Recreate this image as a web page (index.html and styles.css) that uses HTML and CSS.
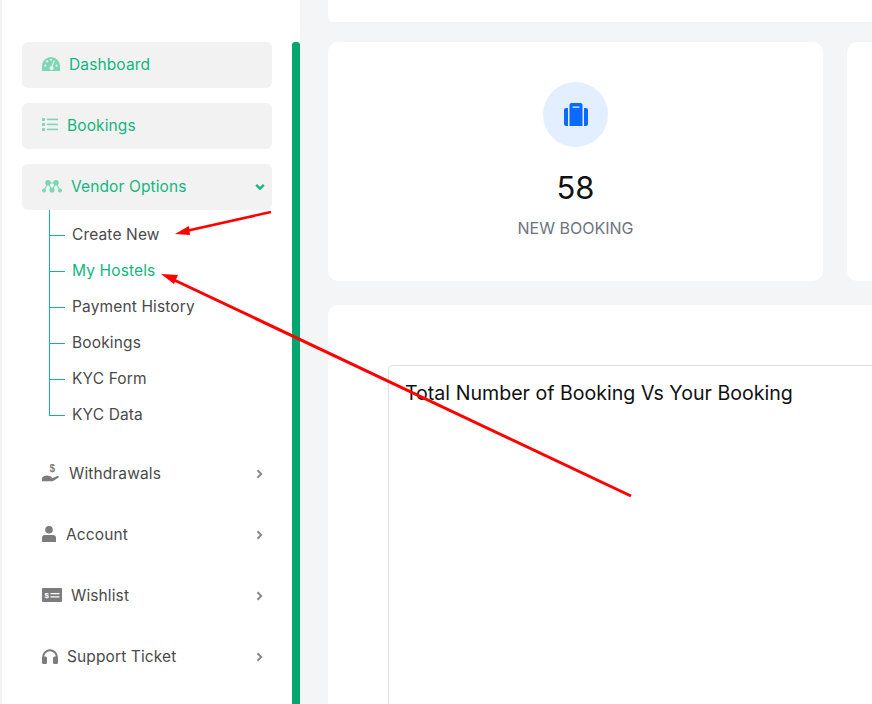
FILE: index.html
```html
<!DOCTYPE html>
<html lang="en">
<head>
  <meta charset="UTF-8">
  <title>Vendor Dashboard</title>
  <link rel="stylesheet" href="styles.css">
</head>
<body>
  <div class="page">
    <aside class="sidebar">
      <nav class="menu">
        <a class="item active">
          <svg class="ico" width="18" height="14" viewBox="0 0 18 14"><path fill="#7dd6b4" d="M9 0a9 9 0 0 1 9 9v5H0V9a9 9 0 0 1 9-9z"/><g fill="#f2f2f2"><circle cx="3.400" cy="8.600" r="1.100"/><circle cx="5.200" cy="4.400" r="1.100"/><circle cx="9" cy="2.800" r="1.100"/><circle cx="14.600" cy="8.600" r="1.100"/><path d="M11.600 3.400l1.200.5-2.200 5.600a2 2 0 1 1-1.300-.3z"/></g></svg>
          <span class="label l-dash">Dashboard</span>
        </a>
        <a class="item active">
          <svg class="ico" width="16" height="14" viewBox="0 0 16 14"><g fill="#7dd6b4"><rect y="0" width="3" height="3" rx="1"/><rect y="5" width="3" height="3" rx="1"/><rect y="10" width="3" height="3" rx="1"/><rect x="5" y=".6" width="11" height="1.600"/><rect x="5" y="5.600" width="11" height="1.600"/><rect x="5" y="10.600" width="11" height="1.600"/></g></svg>
          <span class="label l-book">Bookings</span>
        </a>
        <a class="item active">
          <svg class="ico" width="20" height="13" viewBox="0 0 20 13"><path d="M2 10.500L6 3l4 7 4-7 4 7.500M6 3h8" fill="none" stroke="#7dd6b4" stroke-width="1.100"/><g fill="#7dd6b4"><circle cx="6" cy="2.800" r="2.800"/><circle cx="14" cy="2.800" r="2.800"/><circle cx="10" cy="10" r="2.600"/><circle cx="2" cy="10.600" r="2"/><circle cx="18" cy="10.600" r="2"/></g></svg>
          <span class="label l-vend">Vendor Options</span>
          <svg class="chev" width="10" height="8" viewBox="0 0 10 8"><path d="M1.200 1.800L5 5.600l3.800-3.800" fill="none" stroke="#13b981" stroke-width="2.400"/></svg>
        </a>
        <ul class="sub">
          <li>Create New</li>
          <li class="on">My Hostels</li>
          <li>Payment History</li>
          <li>Bookings</li>
          <li>KYC Form</li>
          <li>KYC Data</li>
        </ul>
        <a class="item">
          <svg class="ico" width="19" height="18" viewBox="0 0 19 18"><text class="dollar" x="7.500" y="8">$</text><path fill="#7c7c7c" d="M0 13.800c2-2 4-2.500 6-2l3 .7c1.200.3 1.200 1.600 0 1.700H6.500h3.500l5-2c1.600-.6 2.600.7 1.300 1.500l-4.800 3c-.6.400-1.200.5-2 .5H0z"/></svg>
          <span class="label l-with">Withdrawals</span>
          <svg class="chev" width="7" height="10" viewBox="0 0 7 10"><path d="M1.500 1.200L5.200 5 1.500 8.800" fill="none" stroke="#8a8a8a" stroke-width="2"/></svg>
        </a>
        <a class="item">
          <svg class="ico" width="14" height="16" viewBox="0 0 14 16"><circle cx="7" cy="3.800" r="3.800" fill="#7c7c7c"/><path fill="#7c7c7c" d="M3 9h8a3 3 0 0 1 3 3v4H0v-4a3 3 0 0 1 3-3z"/></svg>
          <span class="label l-acct">Account</span>
          <svg class="chev" width="7" height="10" viewBox="0 0 7 10"><path d="M1.500 1.200L5.200 5 1.500 8.800" fill="none" stroke="#8a8a8a" stroke-width="2"/></svg>
        </a>
        <a class="item">
          <svg class="ico" width="20" height="14" viewBox="0 0 20 14"><rect width="20" height="14" rx="1" fill="#7c7c7c"/><text class="dollar-w" x="2.500" y="10.300">$</text><path d="M8.500 5.600h9M8.500 8.800h9" stroke="#fff" stroke-width="1.300"/></svg>
          <span class="label l-wish">Wishlist</span>
          <svg class="chev" width="7" height="10" viewBox="0 0 7 10"><path d="M1.500 1.200L5.200 5 1.500 8.800" fill="none" stroke="#8a8a8a" stroke-width="2"/></svg>
        </a>
        <a class="item">
          <svg class="ico" width="16" height="15" viewBox="0 0 16 15"><path d="M1.200 10V8a6.800 6.800 0 0 1 13.600 0v2" fill="none" stroke="#7c7c7c" stroke-width="2"/><rect x="0" y="7.500" width="5" height="7.500" rx="1.500" fill="#7c7c7c"/><rect x="11" y="7.500" width="5" height="7.500" rx="1.500" fill="#7c7c7c"/></svg>
          <span class="label l-supp">Support Ticket</span>
          <svg class="chev" width="7" height="10" viewBox="0 0 7 10"><path d="M1.500 1.200L5.200 5 1.500 8.800" fill="none" stroke="#8a8a8a" stroke-width="2"/></svg>
        </a>
      </nav>
      <div class="scrollbar"></div>
    </aside>

    <main class="content">
      <div class="card top-card"></div>
      <div class="stats">
        <div class="card stat">
          <div class="stat-icon">
            <svg width="24" height="23" viewBox="0 0 24 23"><g fill="#0b6bff"><path d="M5.500 2a2 2 0 0 1 2-2h9a2 2 0 0 1 2 2v21h-13z"/><path d="M4 5v18H2a2 2 0 0 1-2-2V7a2 2 0 0 1 2-2z"/><path d="M20 5v18h2a2 2 0 0 0 2-2V7a2 2 0 0 0-2-2z"/></g><rect x="8.500" y="3.500" width="7" height="1.300" fill="#dce9ff"/></svg>
          </div>
          <div class="stat-num">58</div>
          <div class="stat-name">NEW BOOKING</div>
        </div>
        <div class="card stat"></div>
      </div>
      <div class="card chart-card">
        <div class="chart-box">
          <h4>Total Number of Booking Vs Your Booking</h4>
        </div>
      </div>
    </main>

    <svg class="arrows" width="872" height="704" viewBox="0 0 872 704">
      <g fill="none" stroke="#f00">
        <path stroke-width="2.500" d="M271 212L186 231"/>
        <path stroke-width="3" d="M631 496L172 279"/>
      </g>
      <g fill="#f00">
        <path d="M175 234l14-8 1 9z"/>
        <path d="M161 274l17 1-4 9z"/>
      </g>
    </svg>
  </div>
</body>
</html>
```

FILE: styles.css
```css
* {
  box-sizing: border-box;
}
body {
  margin: 0;
  background: #f4f5f7;
  font-family: Inter, "Noto Sans", sans-serif;
  color: #111;
}
.page {
  position: relative;
  display: flex;
  width: 872px;
  height: 704px;
  overflow: hidden;
}
.sidebar {
  display: flex;
  flex: none;
  width: 298px;
  margin-left: 2px;
  padding: 42px 0 0 20px;
  background: #fff;
}
.menu {
  display: flex;
  flex-direction: column;
  width: 250px;
}
.item {
  display: flex;
  align-items: center;
  flex: none;
  height: 46px;
  margin-bottom: 15px;
  padding: 0 6px 2px 20px;
  border-radius: 6px;
  font-size: 15.5px;
  letter-spacing: .12px;
  color: #4a4a4a;
}
.item.active {
  background: #f2f2f2;
  color: #10b77f;
  padding-right: 7px;
}
.ico {
  flex: none;
}
.label {
  flex: 1;
}
.l-dash { margin-left: 9px; }
.l-book { margin-left: 9px; }
.l-vend { margin-left: 9px; }
.l-with { margin-left: 8px; }
.l-acct { margin-left: 10px; }
.l-wish { margin-left: 9px; }
.l-supp { margin-left: 9px; }
.chev {
  flex: none;
  margin: 2px 3px 0 0;
}
.item.active .chev {
  margin: 1px 0 0 0;
}
.dollar {
  font: bold 10px "Liberation Sans", sans-serif;
  fill: #7c7c7c;
}
.dollar-w {
  font: bold 8px "Liberation Sans", sans-serif;
  fill: #fff;
}
.sub {
  list-style: none;
  flex: none;
  margin: -15px 0 1px 27px;
  padding: 7px 0 17px 0;
  position: relative;
  font-size: 15.5px;
  letter-spacing: .14px;
  color: #4a4a4a;
}
.sub::before {
  content: "";
  position: absolute;
  left: 0;
  top: 0;
  height: 206px;
  width: 1px;
  background: #13b981;
}
.sub li {
  position: relative;
  height: 36px;
  line-height: 36px;
  padding-left: 23px;
}
.sub li::before {
  content: "";
  position: absolute;
  left: 0;
  top: 18px;
  width: 16px;
  height: 1px;
  background: #13b981;
}
.sub li.on {
  color: #10b77f;
}
.scrollbar {
  flex: none;
  width: 8px;
  margin-left: 20px;
  background: #04a56f;
  border-radius: 3px 3px 0 0;
}
.content {
  flex: none;
  width: 572px;
  padding-left: 28px;
}
.card {
  background: #fff;
  border-radius: 10px;
}
.top-card {
  height: 22px;
  width: 800px;
  border-radius: 0 0 6px 6px;
  margin-bottom: 20px;
}
.stats {
  display: grid;
  grid-template-columns: 495px 495px;
  gap: 24px;
  margin-bottom: 24px;
}
.stat {
  display: flex;
  flex-direction: column;
  align-items: center;
  height: 239px;
  padding-top: 40px;
}
.stat-icon {
  display: flex;
  align-items: center;
  justify-content: center;
  width: 65px;
  height: 65px;
  border-radius: 50%;
  background: #e3eefe;
}
.stat-num {
  margin-top: 20px;
  font-size: 31px;
  line-height: 42px;
}
.stat-name {
  margin-top: 9px;
  font-size: 16px;
  color: #6c757d;
}
.chart-card {
  width: 800px;
  height: 500px;
  padding: 60px;
}
.chart-box {
  height: 500px;
  border: 1px solid #e0e0e0;
  border-radius: 4px;
  padding: 15px 16px;
}
.chart-box h4 {
  margin: 0;
  font-size: 19.6px;
  font-weight: 400;
  line-height: 24px;
}
.arrows {
  position: absolute;
  left: 0;
  top: 0;
}
```
